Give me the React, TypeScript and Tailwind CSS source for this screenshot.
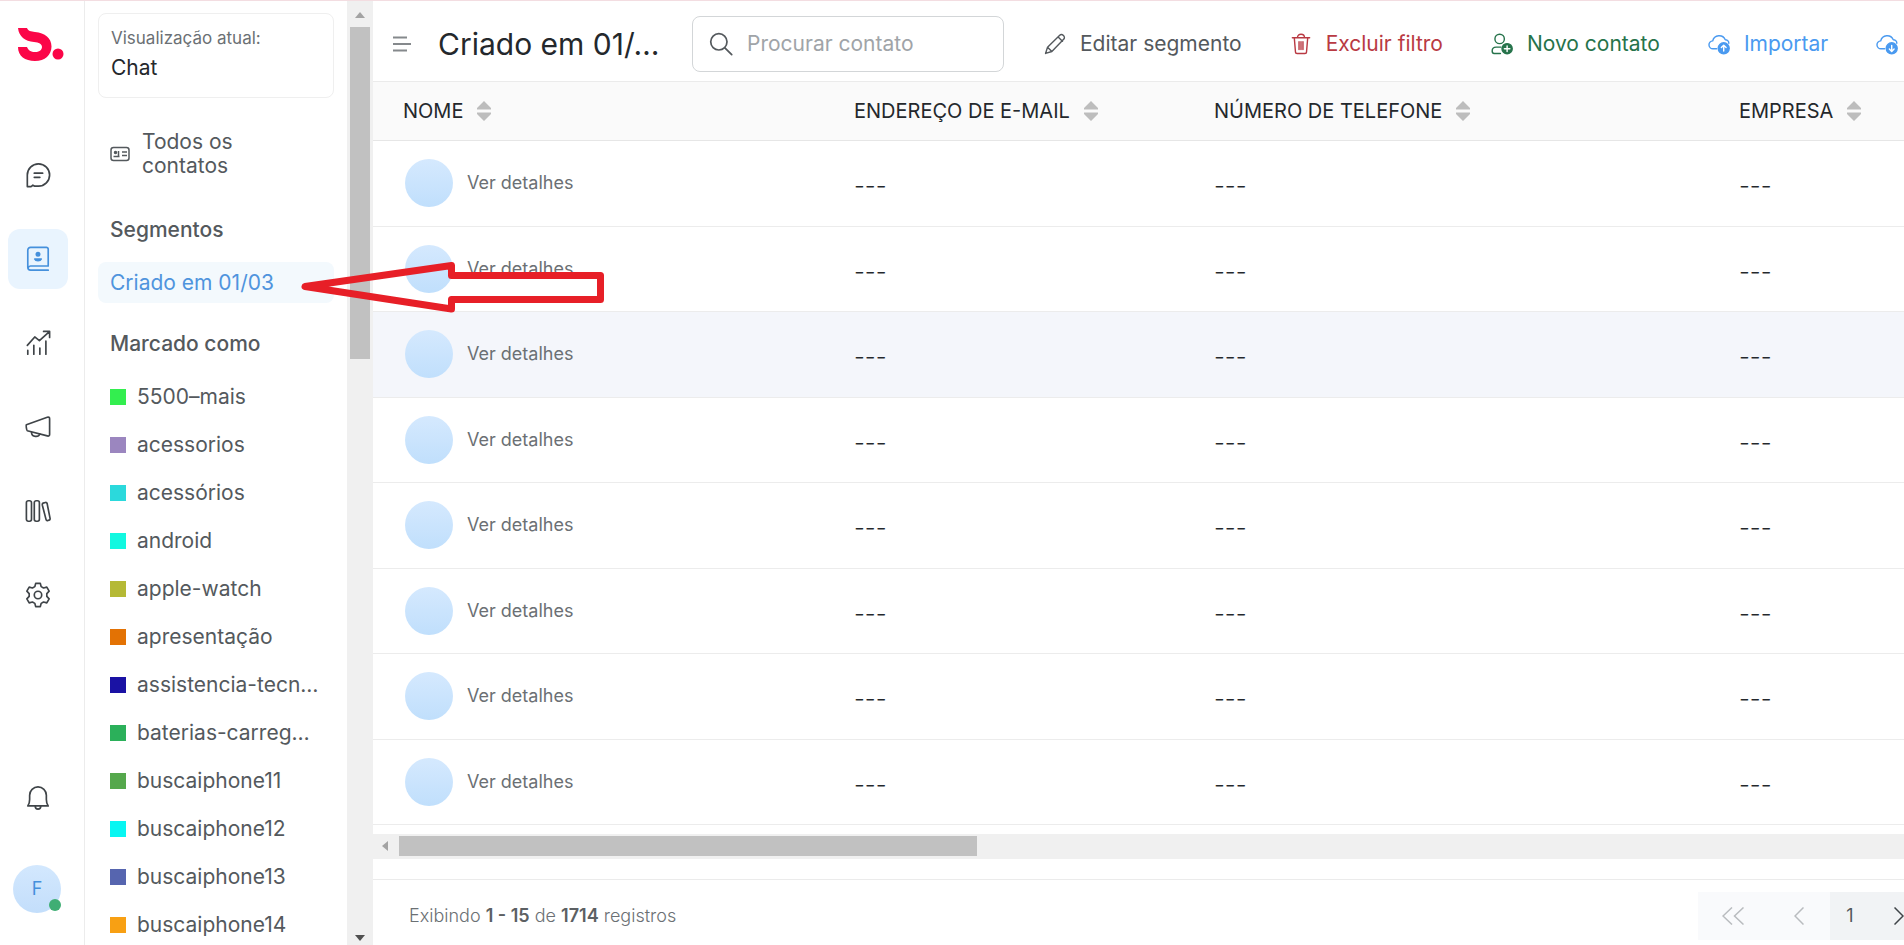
import React from 'react';

const tags = [
  { name: '5500–mais', color: 'bg-[#33ee4f]' },
  { name: 'acessorios', color: 'bg-[#9b86bf]' },
  { name: 'acessórios', color: 'bg-[#2bd9dc]' },
  { name: 'android', color: 'bg-[#12f8e0]' },
  { name: 'apple-watch', color: 'bg-[#b5b935]' },
  { name: 'apresentação', color: 'bg-[#e37204]' },
  { name: 'assistencia-tecn…', color: 'bg-[#1a12a4]' },
  { name: 'baterias-carreg…', color: 'bg-[#2bb05a]' },
  { name: 'buscaiphone11', color: 'bg-[#55a84c]' },
  { name: 'buscaiphone12', color: 'bg-[#08f6f2]' },
  { name: 'buscaiphone13', color: 'bg-[#5665af]' },
  { name: 'buscaiphone14', color: 'bg-[#f8a013]' },
];

const columns = [
  { name: 'NOME', width: 'w-[451px]' },
  { name: 'ENDEREÇO DE E-MAIL', width: 'w-[360px]' },
  { name: 'NÚMERO DE TELEFONE', width: 'w-[525px]' },
  { name: 'EMPRESA', width: 'w-[525px]' },
];

const rows = [1, 2, 3, 4, 5, 6, 7, 8];

function Icon({ children, className = 'size-7' }: { children: React.ReactNode; className?: string }) {
  return (
    <svg
      viewBox="0 0 28 28"
      fill="none"
      stroke="currentColor"
      strokeWidth="1.8"
      strokeLinecap="round"
      strokeLinejoin="round"
      className={`shrink-0 ${className}`}
      aria-hidden="true"
    >
      {children}
    </svg>
  );
}

function Logo() {
  return (
    <svg viewBox="0 0 46 34" className="h-[34px] w-[46px]" aria-hidden="true">
      <path
        d="M0 0h9c1 3 4 3.500 8 4 10 1 16.500 6 16.500 14.500S27 33 17 33C7 33 0 28 0 19h9c1 3 4 5 8 5 4 0 7-2 7-5 0-3-3-4.500-8-5C7 13 1 9 0 0z"
        fill="#fb0648"
      />
      <circle cx="40" cy="26" r="5.5" fill="#fb0648" />
    </svg>
  );
}

const railIcons = [
  {
    label: 'Conversas',
    icon: (
      <>
        <path d="M2.500 26.500V14a12 12 0 1 1 12 12h-4l-2-1-2 1.500z" />
        <path d="M10 12h9M10 16.500h6" />
      </>
    ),
  },
  {
    label: 'Contatos',
    icon: (
      <>
        <path d="M25 21V3.500a2 2 0 0 0-2-2H6a3 3 0 0 0-3 3V23a3 3 0 0 0 3 3h19M25 21.500H6a2.500 2.500 0 0 0-2.500 2" />
        <circle cx="14" cy="9" r="1.800" fill="currentColor" />
        <path d="M10.500 14c1 2.500 6 2.500 7 0z" fill="currentColor" />
      </>
    ),
  },
  {
    label: 'Relatórios',
    icon: (
      <>
        <path d="M2.500 16.500l8-9 5 4L26 2M20 1.500h6.500V8" />
        <path d="M3 22v4M9.500 16.500V26M16 19.500V26M22.500 12v14" />
      </>
    ),
  },
  {
    label: 'Campanhas',
    icon: (
      <>
        <path d="M1.500 11.500L24 3.500c1.500-.5 2.500.2 2.500 1.500v17c0 1.500-1 2-2.500 1.600L2.500 18c-1-.5-1.500-6 -1-6.500z" />
        <path d="M7 20c.5 5 7.500 5.500 9 1.500" />
      </>
    ),
  },
  {
    label: 'Biblioteca',
    icon: (
      <>
        <rect x="1.500" y="3" width="5.500" height="22" rx="2" />
        <rect x="10" y="3" width="5.500" height="22" rx="2" />
        <path d="M19.500 5.500l2.500-.7c1-.2 1.500.2 1.800 1L27 22c.2 1-.2 1.600-1 1.800l-1.500.5c-1 .2-1.600-.2-1.800-1l-4-15.500c-.2-1 0-2 .8-2.300z" />
      </>
    ),
  },
  {
    label: 'Configurações',
    icon: (
      <>
        <path d="M11.500 1.500h5l.9 3.500 2.600 1.500 3.500-1 2.500 4.300L23.500 12.500v3l2.500 2.700-2.500 4.300-3.500-1-2.600 1.500-.9 3.500h-5l-.9-3.500L8 21.500l-3.500 1L2 18.200l2.500-2.700v-3L2 9.800l2.500-4.300 3.500 1L10.600 5z" />
        <circle cx="14" cy="14" r="4" />
      </>
    ),
  },
];

function Rail() {
  return (
    <nav className="flex w-[85px] shrink-0 flex-col items-start border-r border-[#ececec] pb-8">
      <a href="#" aria-label="Início" className="ml-[18px] mt-7">
        <Logo />
      </a>
      <div className="ml-2 mt-[83px] flex flex-col gap-6">
        {railIcons.map(({ label, icon }) => (
          <button
            key={label}
            aria-label={label}
            className={`flex size-[60px] items-center justify-center rounded-xl ${
              label === 'Contatos' ? 'bg-[#e9f4fe] text-[#4590dc]' : 'text-[#3f4448]'
            }`}
          >
            <Icon className="size-[26px]">{icon}</Icon>
          </button>
        ))}
      </div>
      <button
        aria-label="Notificações"
        className="ml-2 mt-auto flex size-[60px] items-center justify-center text-[#3f4448]"
      >
        <Icon className="size-[26px]">
          <path d="M3 22.500h22c-1.500-2-2-4-2-7V11a9 9 0 0 0-18 0v4.500c0 3-.5 5-2 7zM11 23c0 4 6 4 6 0" />
        </Icon>
      </button>
      <button className="relative ml-[13px] mt-[37px] size-12 rounded-full bg-linear-to-b from-[#d3e8fe] to-[#c3defb] text-lg text-[#4590dc]">
        F
        <span className="absolute bottom-0.5 right-0 size-3 rounded-full bg-[#3fae74]" />
      </button>
    </nav>
  );
}

function Sidebar() {
  return (
    <aside className="flex w-[288px] shrink-0">
      <div className="flex min-w-0 flex-1 flex-col overflow-hidden px-[13px] pt-[13px] text-[21px] text-[#54595d]">
        <div className="h-[85px] shrink-0 rounded-lg border border-[#efefef] px-3 pt-3">
          <p className="text-[17px] leading-6 text-[#6b7074]">Visualização atual:</p>
          <p className="mt-1 leading-7 text-[#24282c]">Chat</p>
        </div>
        <a href="#" className="mt-8 flex items-center gap-3 px-3 leading-6">
          <svg viewBox="0 0 20 16" fill="none" stroke="currentColor" strokeWidth="1.5" className="h-4 w-5 shrink-0" aria-hidden="true">
            <rect x="1" y="1.500" width="18" height="13" rx="2.500" />
            <circle cx="5.500" cy="6.500" r="1" fill="currentColor" />
            <path d="M3.500 10.500h6M8.500 5v5M12 6h5M12 9.500h5" />
          </svg>
          <span className="w-28">Todos os contatos</span>
        </a>
        <h2 className="mt-10 px-3 font-medium leading-6">Segmentos</h2>
        <a
          href="#"
          className="mt-5 flex h-[41px] shrink-0 items-center rounded-lg bg-[#f3f9fd] px-3 text-[#4f94dd]"
        >
          Criado em 01/03
        </a>
        <h2 className="mt-[29px] px-3 font-medium leading-6">Marcado como</h2>
        <ul className="mt-[17px]">
          {tags.map((tag) => (
            <li key={tag.name}>
              <a href="#" className="flex h-12 items-center gap-[11px] px-3">
                <span className={`size-4 shrink-0 ${tag.color}`} />
                <span className="whitespace-nowrap">{tag.name}</span>
              </a>
            </li>
          ))}
        </ul>
      </div>
      <div className="flex w-[26px] shrink-0 flex-col items-center bg-[#f0f0f0] pb-1 pr-px pt-3">
        <svg viewBox="0 0 10 6" className="h-1.5 w-2.5 fill-[#a3a3a3]" aria-hidden="true">
          <path d="M0 6l5-6 5 6z" />
        </svg>
        <div className="mt-[9px] h-[332px] w-5 bg-[#c1c1c1]" />
        <svg viewBox="0 0 10 6" className="mt-auto h-1.5 w-2.5 fill-[#505050]" aria-hidden="true">
          <path d="M0 0l5 6 5-6z" />
        </svg>
      </div>
    </aside>
  );
}

function Cloud({ up }: { up: boolean }) {
  return (
    <Icon className="size-[22px]">
      <path d="M11 20H6.500a5 5 0 0 1-.5-10A8.500 8.500 0 0 1 22 8.500c2.500 0 4.500 2 4.500 4.500" />
      <circle cx="20" cy="19.500" r="7" fill="currentColor" />
      <path stroke="#fff" d={up ? 'M20 23v-7M17 18.500l3-3 3 3' : 'M20 16v7M17 20.500l3 3 3-3'} />
    </Icon>
  );
}

function Header() {
  return (
    <header className="flex h-[82px] shrink-0 items-center border-b border-[#ebebeb] pt-1.5">
      <button aria-label="Recolher menu" className="ml-5">
        <svg viewBox="0 0 18 16" stroke="#85898c" strokeWidth="1.800" className="h-4 w-[18px]" aria-hidden="true">
          <path d="M0 1.500h14M0 8h18M0 14.500h14" />
        </svg>
      </button>
      <h1 className="ml-[27px] w-[254px] whitespace-nowrap text-3xl text-[#24282c]">Criado em 01/…</h1>
      <label className="flex h-14 w-[312px] shrink-0 items-center gap-3.5 rounded-lg border border-[#d3d6d8] px-4 text-[#54595d]">
        <Icon className="size-6">
          <circle cx="11.500" cy="11.500" r="9.500" strokeWidth="2" />
          <path d="M18.500 18.500l8 8" strokeWidth="2" />
        </Icon>
        <input
          type="text"
          aria-label="Procurar contato"
          placeholder="Procurar contato"
          className="w-[168px] text-[21px] outline-none placeholder:text-[#a0a4a8]"
        />
      </label>
      <div className="ml-10 flex shrink-0 items-center gap-12 whitespace-nowrap text-[21px]">
        <button className="flex items-center gap-3.5 text-[#54595d]">
          <Icon className="size-[22px]">
            <path d="M2 26l2.500-8L20 3c3-3 8 2 5 5L10 23.500zM18 5l5.500 5.500M4.500 18l5.500 5.500" />
          </Icon>
          Editar segmento
        </button>
        <button className="flex items-center gap-3.5 text-[#b93a43]">
          <Icon className="size-[22px]">
            <path d="M3 6h22M9.500 6c0-6 9-6 9 0M5.500 6.500l1.500 18c0 1 .8 1.500 2 1.500h10c1.200 0 2-.5 2-1.500l1.500-18M11.500 11v10M14 11v10M16.500 11v10" />
          </Icon>
          Excluir filtro
        </button>
        <button className="flex items-center gap-3.5 text-[#26734b]">
          <Icon className="size-[22px]">
            <circle cx="11" cy="7.500" r="6" />
            <path d="M12 26H4c-2 0-2.500-1-2.500-3 0-3 2-5 5-5h6" />
            <circle cx="20.500" cy="20" r="6.500" fill="currentColor" />
            <path stroke="#fff" d="M20.500 16.500v7M17 20h7" />
          </Icon>
          Novo contato
        </button>
        <button className="flex items-center gap-3.5 text-[#4a9af0]">
          <Cloud up />
          Importar
        </button>
        <button aria-label="Exportar" className="text-[#4a9af0]">
          <Cloud up={false} />
        </button>
      </div>
    </header>
  );
}

function ContactsTable() {
  return (
    <table className="w-[1861px] table-fixed border-collapse text-left">
      <thead>
        <tr className="h-[58px] border-b border-[#e6e6e6] bg-[#fafafa]">
          {columns.map((column) => (
            <th key={column.name} className={`pl-[30px] font-normal ${column.width}`}>
              <button className="flex items-center gap-3.5 text-xl text-[#24282c]">
                {column.name}
                <svg viewBox="0 0 14 20" className="h-5 w-3.5 fill-[#bdbdbd]" aria-hidden="true">
                  <path d="M7 0l7 7v1.500H0V7zM7 20l7-7v-1.500H0V13z" />
                </svg>
              </button>
            </th>
          ))}
        </tr>
      </thead>
      <tbody>
        {rows.map((row) => (
          <tr
            key={row}
            className={`border-b border-[#ececec] odd:h-[86px] even:h-[85px] ${row === 3 ? 'bg-[#f4f6fb]' : ''}`}
          >
            <td className="pl-8">
              <a href="#" className="flex items-center gap-3.5 text-lg text-[#6b7074]">
                <span className="size-12 rounded-full bg-linear-to-b from-[#d5e9fe] to-[#c0dffc]" />
                Ver detalhes
              </a>
            </td>
            <td className="pl-[30px] pt-1.5 text-2xl font-light text-[#24282c]">---</td>
            <td className="pl-[30px] pt-1.5 text-2xl font-light text-[#24282c]">---</td>
            <td className="pl-[30px] pt-1.5 text-2xl font-light text-[#24282c]">---</td>
          </tr>
        ))}
      </tbody>
    </table>
  );
}

function Footer() {
  return (
    <footer className="mt-5 flex flex-1 items-center justify-between border-t border-[#ebebeb] pl-9 pt-2">
      <p className="text-lg font-light text-[#6b7074]">
        Exibindo <b className="font-semibold text-[#5c6063]">1 - 15</b> de{' '}
        <b className="font-semibold text-[#5c6063]">1714</b> registros
      </p>
      <div className="flex h-12 w-[206px] items-center overflow-hidden bg-[#f9fafc] text-[#b9bcbf]">
        <button aria-label="Primeira página" className="flex w-[70px] shrink-0 justify-center">
          <svg viewBox="0 0 22 18" fill="none" stroke="currentColor" strokeWidth="1.500" className="h-[18px] w-[22px]">
            <path d="M10 0.500L1 9l9 8.500M21.500 0.500L12.500 9l9 8.500" />
          </svg>
        </button>
        <button aria-label="Página anterior" className="flex w-[62px] shrink-0 justify-center">
          <svg viewBox="0 0 10 18" fill="none" stroke="currentColor" strokeWidth="1.500" className="h-[18px] w-2.5">
            <path d="M9.500 0.500L1 9l8.500 8.500" />
          </svg>
        </button>
        <button className="h-12 w-10 shrink-0 bg-[#f1f3f5] text-lg text-[#54595d]">1</button>
        <button aria-label="Próxima página" className="flex h-12 w-16 shrink-0 items-center bg-[#f1f3f5] pl-6 text-[#3f4448]">
          <svg viewBox="0 0 10 18" fill="none" stroke="currentColor" strokeWidth="1.500" className="h-[18px] w-2.5">
            <path d="M0.500 0.500L9 9l-8.500 8.500" />
          </svg>
        </button>
      </div>
    </footer>
  );
}

export default function App() {
  return (
    <div className="relative flex h-screen overflow-hidden bg-white font-['Inter',sans-serif]">
      <Rail />
      <Sidebar />
      <main className="flex min-w-0 flex-1 flex-col overflow-hidden">
        <Header />
        <ContactsTable />
        {/* horizontal scrollbar */}
        <div className="mt-[9px] flex h-[25px] shrink-0 items-center bg-[#f0f0f0] pl-[9px]">
          <svg viewBox="0 0 6 10" className="h-2.5 w-1.5 fill-[#a3a3a3]" aria-hidden="true">
            <path d="M6 0L0 5l6 5z" />
          </svg>
          <div className="ml-[11px] h-5 w-[38%] bg-[#c1c1c1]" />
        </div>
        <Footer />
      </main>
      <div className="absolute inset-x-0 top-0 h-px bg-[#f3dde1]" />
      {/* arrow pointing at the selected segment */}
      <svg
        viewBox="0 0 304 52"
        fill="none"
        stroke="#e71f27"
        strokeWidth="7"
        className="pointer-events-none absolute left-[301px] top-[261px] h-[52px] w-[304px]"
        aria-hidden="true"
      >
        <path d="M4 25.500L150.500 4.500v10h149v24h-149v9.500z" strokeLinejoin="round" />
      </svg>
    </div>
  );
}
